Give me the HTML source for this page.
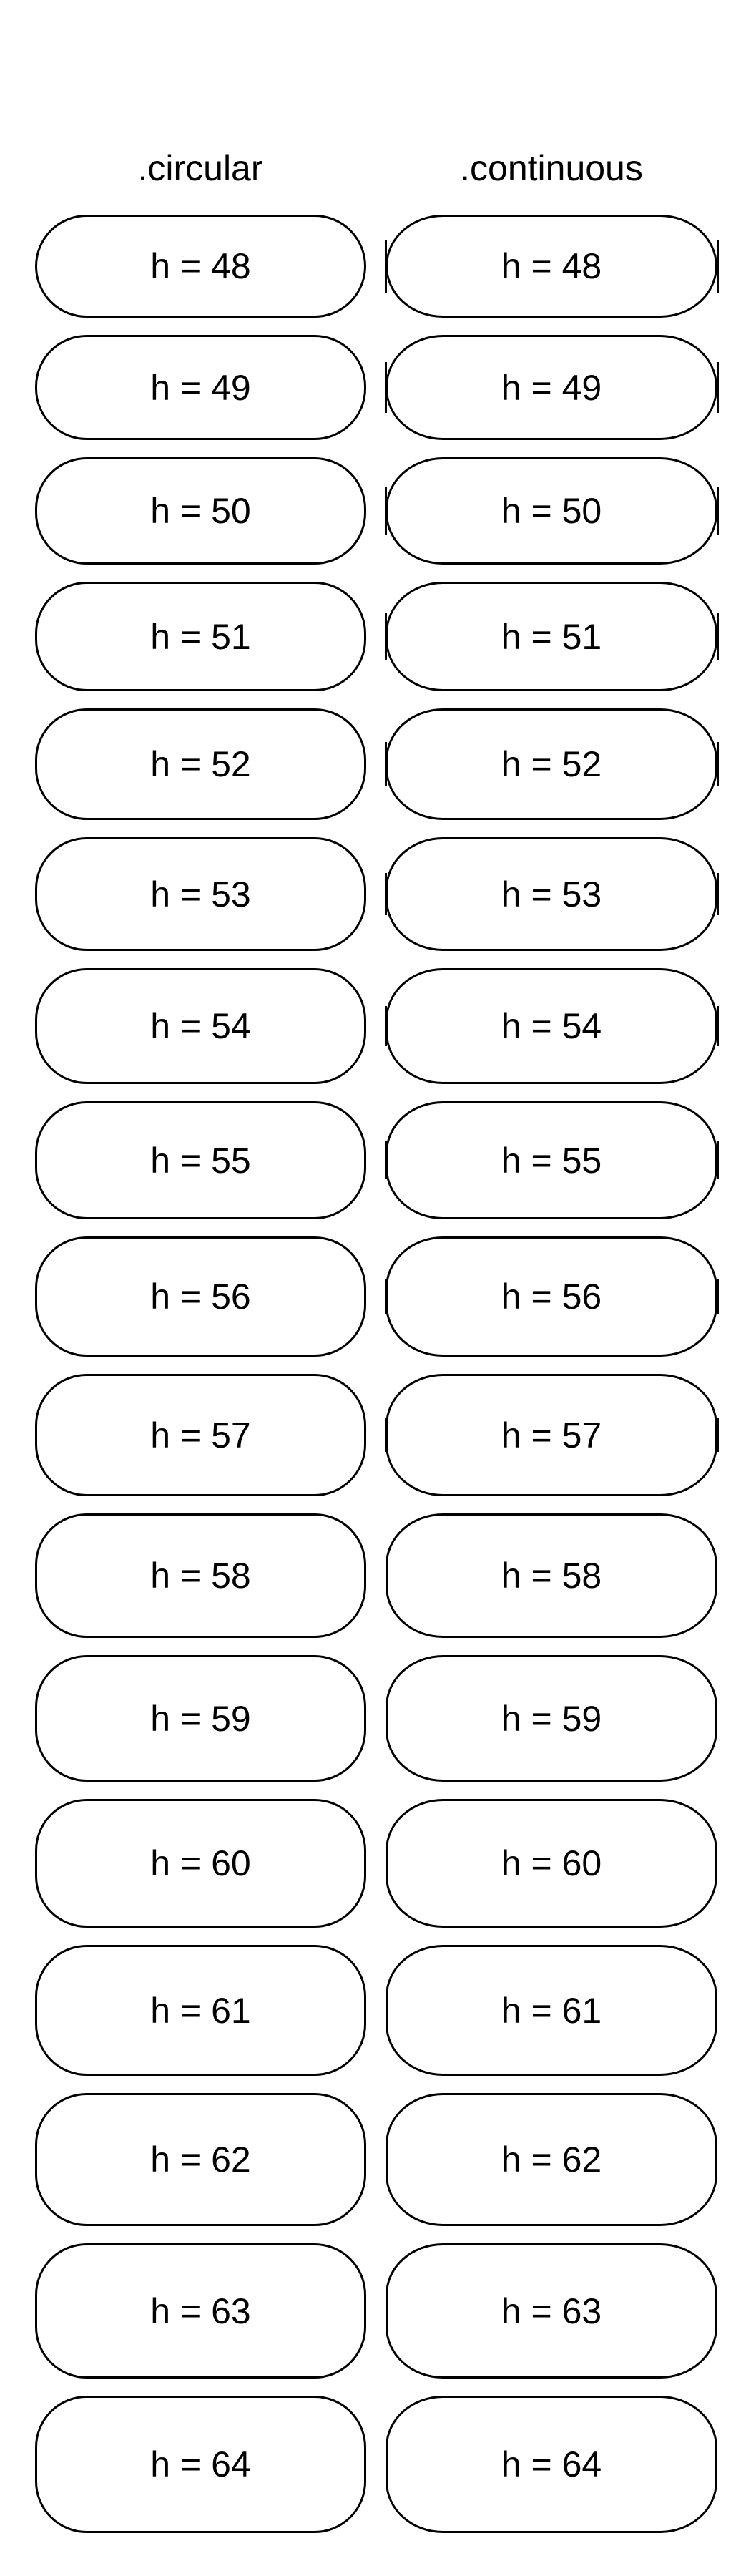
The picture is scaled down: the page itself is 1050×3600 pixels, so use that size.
<!DOCTYPE html>
<html><head><meta charset="utf-8"><style>
html,body{margin:0;padding:0;background:#fff;}
body{width:1050px;height:3600px;position:relative;overflow:hidden;font-family:"Liberation Sans",sans-serif;color:#000;}
.t{position:absolute;top:210px;width:470px;text-align:center;font-size:50px;line-height:50px;}
.b{position:absolute;box-sizing:border-box;border:3px solid #000;border-radius:72px;display:flex;align-items:center;justify-content:center;font-size:50px;background:transparent;}
.c{left:49px;width:463px;}
.k{left:539px;width:464px;border-radius:80px/72px;}
.bar{position:absolute;width:3px;background:#000;}
</style></head><body>
<div class="t" style="left:45px">.circular</div>
<div class="t" style="left:536px">.continuous</div>

<div class="b c" style="top:300px;height:144px">h = 48</div><div class="b k" style="top:300px;height:144px">h = 48</div>
<div class="bar" style="left:538px;top:335px;height:74px"></div><div class="bar" style="left:1002px;top:335px;height:74px"></div>

<div class="b c" style="top:468px;height:147px">h = 49</div><div class="b k" style="top:468px;height:147px">h = 49</div>
<div class="bar" style="left:538px;top:506px;height:71px"></div><div class="bar" style="left:1002px;top:506px;height:71px"></div>

<div class="b c" style="top:639px;height:150px">h = 50</div><div class="b k" style="top:639px;height:150px">h = 50</div>
<div class="bar" style="left:538px;top:680px;height:68px"></div><div class="bar" style="left:1002px;top:680px;height:68px"></div>

<div class="b c" style="top:813px;height:153px">h = 51</div><div class="b k" style="top:813px;height:153px">h = 51</div>
<div class="bar" style="left:538px;top:857px;height:65px"></div><div class="bar" style="left:1002px;top:857px;height:65px"></div>

<div class="b c" style="top:990px;height:156px">h = 52</div><div class="b k" style="top:990px;height:156px">h = 52</div>
<div class="bar" style="left:538px;top:1037px;height:62px"></div><div class="bar" style="left:1002px;top:1037px;height:62px"></div>

<div class="b c" style="top:1170px;height:159px">h = 53</div><div class="b k" style="top:1170px;height:159px">h = 53</div>
<div class="bar" style="left:538px;top:1220px;height:59px"></div><div class="bar" style="left:1002px;top:1220px;height:59px"></div>

<div class="b c" style="top:1353px;height:162px">h = 54</div><div class="b k" style="top:1353px;height:162px">h = 54</div>
<div class="bar" style="left:538px;top:1406px;height:56px"></div><div class="bar" style="left:1002px;top:1406px;height:56px"></div>

<div class="b c" style="top:1539px;height:165px">h = 55</div><div class="b k" style="top:1539px;height:165px">h = 55</div>
<div class="bar" style="left:538px;top:1595px;height:53px"></div><div class="bar" style="left:1002px;top:1595px;height:53px"></div>

<div class="b c" style="top:1728px;height:168px">h = 56</div><div class="b k" style="top:1728px;height:168px">h = 56</div>
<div class="bar" style="left:538px;top:1787px;height:50px"></div><div class="bar" style="left:1002px;top:1787px;height:50px"></div>

<div class="b c" style="top:1920px;height:171px">h = 57</div><div class="b k" style="top:1920px;height:171px">h = 57</div>
<div class="bar" style="left:538px;top:1982px;height:47px"></div><div class="bar" style="left:1002px;top:1982px;height:47px"></div>

<div class="b c" style="top:2115px;height:174px">h = 58</div><div class="b k" style="top:2115px;height:174px">h = 58</div>
<div class="b c" style="top:2313px;height:177px">h = 59</div><div class="b k" style="top:2313px;height:177px">h = 59</div>
<div class="b c" style="top:2514px;height:180px">h = 60</div><div class="b k" style="top:2514px;height:180px">h = 60</div>
<div class="b c" style="top:2718px;height:183px">h = 61</div><div class="b k" style="top:2718px;height:183px">h = 61</div>
<div class="b c" style="top:2925px;height:186px">h = 62</div><div class="b k" style="top:2925px;height:186px">h = 62</div>
<div class="b c" style="top:3135px;height:189px">h = 63</div><div class="b k" style="top:3135px;height:189px">h = 63</div>
<div class="b c" style="top:3348px;height:192px">h = 64</div><div class="b k" style="top:3348px;height:192px">h = 64</div>
</body></html>
